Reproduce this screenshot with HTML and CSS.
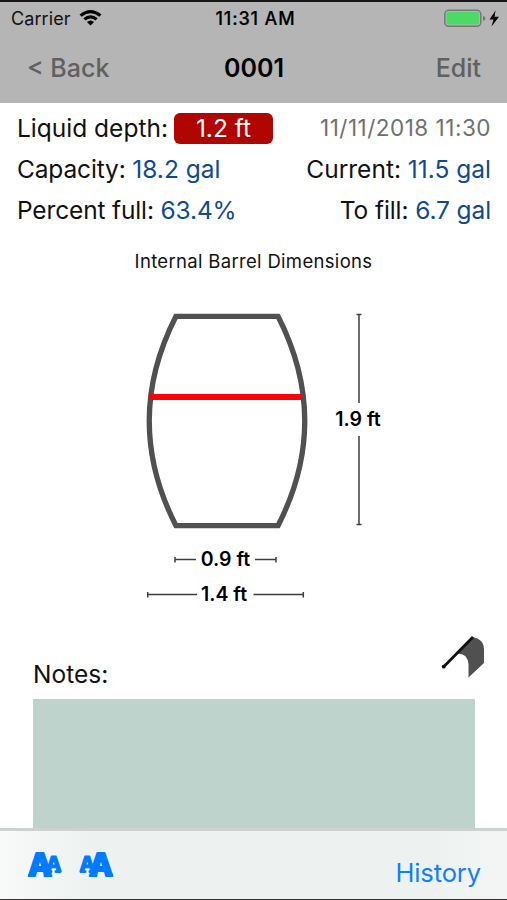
FILE: index.html
```html
<!DOCTYPE html>
<html lang="en">
<head>
<meta charset="utf-8">
<title>0001</title>
<link rel="stylesheet" href="styles.css">
</head>
<body>
<div class="screen">
  <header class="header">
    <div class="status">
      <div class="carrier"><span>Carrier</span>
        <svg class="wifi" width="23" height="16" viewBox="0 0 23 16"><path d="M.5 4.500Q11.500-4.500 22.500 4.500L20.300 6.800Q11.500-.1 2.700 6.800Z"/><path d="M4.300 8.300Q11.500 2.200 18.700 8.300L16.500 10.600Q11.500 6.600 6.500 10.600Z"/><path d="M7.900 12Q11.500 9 15.100 12L11.500 15.600Z"/></svg>
      </div>
      <div class="clock">11:31 AM</div>
      <svg class="battery" width="56" height="20" viewBox="0 0 56 20"><rect x=".8" y="1.3" width="36" height="16" rx="4" fill="none" stroke="#777" stroke-width="1.5"/><rect x="2.5" y="3" width="32.5" height="12.6" rx="2" fill="#4cd964"/><path d="M39 7Q41.5 7.5 41.5 9.4T39 12Z" fill="#777"/><path d="M51.500 1.500L45.500 10.500H49.500L47.500 17.500L55 7.800H50.600Z" fill="#000"/></svg>
    </div>
    <nav class="nav"><span class="back">&lt; Back</span><h1 class="title">0001</h1><span class="edit">Edit</span></nav>
  </header>
  <main class="content">
    <div class="row"><span class="depth"><span class="label">Liquid depth:</span><span class="badge">1.2 ft</span></span><span class="date">11/11/2018 11:30</span></div>
    <div class="row"><span class="capacity">Capacity: <b>18.2 gal</b></span><span class="current">Current: <b>11.5 gal</b></span></div>
    <div class="row"><span class="percent">Percent full: <b>63.4%</b></span><span class="fill">To fill: <b>6.7 gal</b></span></div>
    <h2 class="caption">Internal Barrel Dimensions</h2>
    <svg class="diagram" width="507" height="330" viewBox="0 290 507 330">
      <path class="barrel" d="M176 316.300H278Q331.500 421 278 525.700H176Q122.500 421 176 316.300Z"/>
      <path class="level" d="M149 397H302"/>
      <path class="measure" d="M359 314.500V403M359 436V524.500M356.500 314.500H361.500M356.500 524.500H361.500M175 559.500H196M255 559.500H276M175 557V562.500M276 557V562.500M147.700 594.500H197M253.500 594.500H303.300M147.700 592V597.500M303.300 592V597.500"/>
      <text x="358" y="426">1.9 ft</text>
      <text x="225.500" y="566">0.9 ft</text>
      <text x="224" y="601">1.4 ft</text>
    </svg>
    <div class="notes-head"><label for="notes">Notes:</label>
      <svg class="flag" width="46" height="46" viewBox="0 0 46 46"><path d="M16 21L32.500 4Q38 5 41 8Q44 11 44 17V30L28.500 44.500V31Q27 19 16 21Z" fill="#505050"/><path d="M3.500 34L33 4" stroke="#111" stroke-width="2.800"/><circle cx="3.700" cy="33.700" r="1.900" fill="#111"/></svg>
    </div>
    <div class="notes" id="notes"></div>
  </main>
  <footer class="toolbar">
    <div class="sizes">
      <svg width="36" height="30" viewBox="0 0 36 30"><text class="big" x="14" y="24.500">A</text><text class="small" x="27.800" y="20">A</text><path class="feet" d="M3.500 24H8.500M19 24.500H24M22.500 20.500H25M30 20.500H34"/></svg>
      <svg width="36" height="30" viewBox="0 0 36 30"><text class="small" x="8.200" y="20">A</text><text class="big" x="22" y="24.500">A</text><path class="feet" d="M2 20.500H6M11 20.500H13.500M12 24.500H17M27.500 24H32.500"/></svg>
    </div>
    <span class="history">History</span>
  </footer>
</div>
</body>
</html>
```

FILE: styles.css
```css
* { box-sizing: border-box; }
body { margin: 0; background: #fff; color: #111; font-family: Inter, "Liberation Sans", sans-serif; }
.screen { width: 507px; height: 900px; display: flex; flex-direction: column; overflow: hidden; }
.header { flex: none; height: 102.500px; background: #b5b5b5; border-top: 2px solid #151515; }
.status { height: 33px; display: grid; grid-template-columns: 1fr auto 1fr; align-items: center; padding: 0 7px 0 11px; color: #111; }
.carrier { display: flex; align-items: center; gap: 8px; font-size: 18px; letter-spacing: .1px; }
.wifi { fill: #000; margin-top: -2px; }
.clock { font-size: 18px; font-weight: 500; letter-spacing: .85px; color: #000; -webkit-text-stroke: .2px; }
.battery { justify-self: end; }
.nav { height: 66px; display: grid; grid-template-columns: 1fr auto 1fr; align-items: center; padding: 0 26px 0 27px; font-size: 25px; font-weight: 500; color: #606060; }
.title { margin: 0; font-size: 25px; font-weight: 600; color: #000; }
.edit { justify-self: end; }
.content { flex: 1; min-height: 0; padding-top: 5px; display: flex; flex-direction: column; }
.row { flex: none; height: 41px; padding: 0 16px 0 17px; display: flex; justify-content: space-between; align-items: center; font-size: 24.500px; white-space: nowrap; }
.row b { font-weight: 400; color: #114a8b; }
.depth { display: flex; align-items: center; gap: 6px; }
.badge { width: 99px; height: 31px; border-radius: 6px; background: #b00500; color: #fff; text-align: center; line-height: 31px; }
.capacity { letter-spacing: -.15px; }
.capacity b { letter-spacing: 0; }
.percent { letter-spacing: -.15px; }
.fill { letter-spacing: -.1px; }
.date { font-size: 22.500px; letter-spacing: .5px; color: #707070; position: relative; top: -1px; }
.caption { flex: none; margin: 18px 0 0; height: 38px; font-size: 18.500px; font-weight: 400; line-height: 24px; text-align: center; letter-spacing: .32px; }
.diagram { flex: none; margin-top: 3px; }
.barrel { fill: none; stroke: #505050; stroke-width: 5.300; }
.level { stroke: #f00; stroke-width: 6; }
.measure { fill: none; stroke: #3d3d3d; stroke-width: 1.500; }
.diagram text { font-size: 19.500px; font-weight: 600; text-anchor: middle; fill: #000; }
.notes-head { flex: none; height: 79px; padding: 13px 21px 0 33px; display: flex; justify-content: space-between; font-size: 24.500px; }
.notes-head label { margin-top: 26px; line-height: 30px; }
.notes { flex: none; width: 442px; height: 150px; margin-left: 33px; background: #bdd3cb; }
.toolbar { position: relative; flex: none; height: 72px; padding: 0 26px 0 26px; display: flex; justify-content: space-between; border-top: 3px solid #ccd2d0; border-bottom: 1px solid #333; background: linear-gradient(90deg, #f8f9f9 0, #edf2f0 18%, #edf2f0 85%, #f3f5f4 100%); }
.sizes { display: flex; gap: 17px; padding-top: 20px; }
.sizes svg { overflow: visible; }
.sizes text { font-family: Inter, sans-serif; font-weight: 800; text-anchor: middle; fill: #007aff; stroke: #007aff; stroke-width: 2; stroke-linejoin: round; }
.sizes .big { font-size: 31px; }
.sizes .small { font-size: 20px; stroke-width: 1; }
.feet { stroke: #007aff; stroke-width: 3; stroke-linecap: round; }
.history { padding-top: 26px; font-size: 25.500px; line-height: 32px; letter-spacing: -.1px; color: #147efb; }
```
